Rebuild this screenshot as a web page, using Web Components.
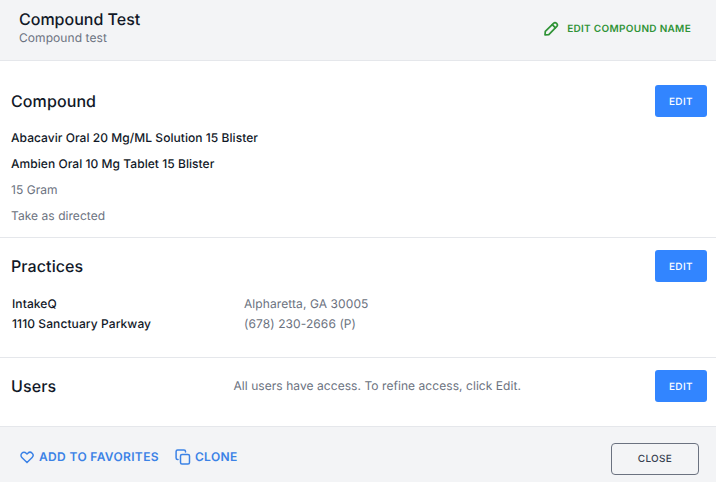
<!DOCTYPE html>
<html>
<head>
<meta charset="utf-8">
<title>Compound Test</title>
<style>
  html, body { margin: 0; padding: 0; background: #fff; }
  body { width: 716px; height: 482px; overflow: hidden; font-family: Inter, "Liberation Sans", sans-serif; color: #111827; text-rendering: geometricPrecision; }
</style>
</head>
<body>
<compound-modal>
  <modal-header slot="header" heading="Compound Test" sub="Compound test"></modal-header>

  <modal-section heading="Compound" style="--sec-h:176px; --head-top:24px; --body-top:8px">
    <p class="strong">Abacavir Oral 20 Mg/ML Solution 15 Blister</p>
    <p class="strong">Ambien Oral 10 Mg Tablet 15 Blister</p>
    <p>15 Gram</p>
    <p>Take as directed</p>
  </modal-section>

  <modal-section heading="Practices" style="--sec-h:119px; --head-top:12px; --body-top:12px">
    <practice-row>
      <span slot="name">IntakeQ</span>
      <span slot="address">1110 Sanctuary Parkway</span>
      <span slot="city">Alpharetta, GA 30005</span>
      <span slot="phone">(678) 230-2666 (P)</span>
    </practice-row>
  </modal-section>

  <modal-section heading="Users" note="All users have access. To refine access, click Edit." style="--sec-h:67px; --head-top:12px; --body-top:0px"></modal-section>

  <modal-footer slot="footer"></modal-footer>
</compound-modal>

<script>
  class CompoundModal extends HTMLElement {
    connectedCallback() {
      this.attachShadow({ mode: 'open' });
      this.shadowRoot.innerHTML = `
        <style>
          :host { display: flex; flex-direction: column; width: 716px; height: 482px; background: #fff; }
          main { flex: 1; display: flex; flex-direction: column; }
          ::slotted(*) { flex: none; }
        </style>
        <slot name="header"></slot>
        <main><slot></slot></main>
        <slot name="footer"></slot>
      `;
    }
  }

  class ModalHeader extends HTMLElement {
    connectedCallback() {
      this.attachShadow({ mode: 'open' });
      this.shadowRoot.innerHTML = `
        <style>
          :host {
            display: flex;
            justify-content: space-between;
            align-items: center;
            height: 60px;
            padding: 0 25px 0 19px;
            background: #f3f4f6;
            border-bottom: 1px solid #e5e7eb;
          }
          h1 { margin: 0; font-size: 16px; line-height: 20px; font-weight: 500; color: #111827; }
          p { margin: 0; font-size: 12px; line-height: 18px; letter-spacing: 0.07px; color: #6b7280; }
          .titles { margin-top: -4px; }
          .edit {
            display: flex;
            align-items: center;
            gap: 8px;
            margin-top: -3px;
            font-size: 10px;
            font-weight: 600;
            letter-spacing: 0.3px;
            color: #2f9336;
          }
          svg { display: block; }
        </style>
        <div class="titles">
          <h1>${this.getAttribute('heading')}</h1>
          <p>${this.getAttribute('sub')}</p>
        </div>
        <div class="edit">
          <svg width="15" height="15" viewBox="0 0 15 15" fill="none" stroke="currentColor" stroke-width="1.7" stroke-linejoin="round" stroke-linecap="round">
            <path d="M1 13.9 L1.3 10.3 L9.5 2.3 C10.4 1.4 11.6 1.4 12.6 2.3 C13.6 3.3 13.7 4.4 12.8 5.4 L4.8 13.6 Z"/>
            <path d="M8.3 3.6 L11.4 6.8"/>
          </svg>
          <span>EDIT COMPOUND NAME</span>
        </div>
      `;
    }
  }

  class ModalSection extends HTMLElement {
    connectedCallback() {
      const note = this.getAttribute('note');
      this.attachShadow({ mode: 'open' });
      this.shadowRoot.innerHTML = `
        <style>
          :host {
            display: block;
            box-sizing: border-box;
            height: calc(var(--sec-h) + 1px);
            padding: var(--head-top) 9px 0 11px;
            border-bottom: 1px solid #e5e7eb;
          }
          :host(:last-of-type) { border-bottom: 0; }
          .top { display: flex; align-items: center; height: 32px; }
          h2 { margin: 0; font-size: 16px; line-height: 20px; font-weight: 500; letter-spacing: 0.1px; color: #111827; }
          .note { margin-left: auto; margin-right: 134px; margin-bottom: 2px; font-size: 12px; letter-spacing: 0.06px; color: #6b7280; }
          edit-button { margin-left: auto; }
          .note + edit-button { margin-left: 0; }
          .body { padding-top: var(--body-top); font-size: 12px; letter-spacing: 0.05px; color: #6b7280; }
          ::slotted(p) { margin: 0; height: 26px; line-height: 26px; }
          ::slotted(p.strong) { font-weight: 500; color: #111827; }
        </style>
        <div class="top">
          <h2>${this.getAttribute('heading')}</h2>
          ${note ? `<span class="note">${note}</span>` : ''}
          <edit-button></edit-button>
        </div>
        <div class="body"><slot></slot></div>
      `;
    }
  }

  class EditButton extends HTMLElement {
    connectedCallback() {
      this.attachShadow({ mode: 'open' });
      this.shadowRoot.innerHTML = `
        <style>
          :host {
            display: flex;
            align-items: center;
            justify-content: center;
            box-sizing: border-box;
            width: 52px;
            height: 32px;
            padding-top: 2px;
            border-radius: 3px;
            background: #3285ff;
            color: #fff;
            font-size: 10px;
            font-weight: 500;
            letter-spacing: 0.4px;
          }
        </style>
        EDIT
      `;
    }
  }

  class PracticeRow extends HTMLElement {
    connectedCallback() {
      this.attachShadow({ mode: 'open' });
      this.shadowRoot.innerHTML = `
        <style>
          :host {
            display: grid;
            grid-template-columns: 232px 1fr;
            grid-auto-rows: 20px;
            padding-left: 1px;
            font-size: 12px;
            line-height: 20px;
            letter-spacing: 0.09px;
          }
          .b { font-weight: 500; color: #111827; }
          .l { color: #6b7280; }
        </style>
        <div class="b"><slot name="name"></slot></div>
        <div class="l"><slot name="city"></slot></div>
        <div class="b"><slot name="address"></slot></div>
        <div class="l"><slot name="phone"></slot></div>
      `;
    }
  }

  class ModalFooter extends HTMLElement {
    connectedCallback() {
      this.attachShadow({ mode: 'open' });
      this.shadowRoot.innerHTML = `
        <style>
          :host {
            display: flex;
            align-items: center;
            box-sizing: border-box;
            height: 56px;
            padding: 6px 17px 0 19px;
            background: #f3f4f6;
            border-top: 1px solid #e5e7eb;
          }
          .link {
            display: flex;
            align-items: center;
            gap: 4px;
            margin-right: 16px;
            margin-top: -2px;
            font-size: 12px;
            font-weight: 600;
            letter-spacing: 0.35px;
            color: #3b82e6;
          }
          svg { display: block; }
          .close {
            box-sizing: border-box;
            display: flex;
            align-items: center;
            justify-content: center;
            width: 88px;
            height: 32px;
            margin: 3px 0 0 auto;
            border: 1px solid #6b7280;
            border-radius: 4px;
            font-size: 10px;
            font-weight: 500;
            letter-spacing: 0.3px;
            color: #374151;
          }
        </style>
        <div class="link">
          <svg width="16" height="16" viewBox="0 0 24 24" fill="none" stroke="currentColor" stroke-width="2.2" stroke-linejoin="round" stroke-linecap="round">
            <path d="M4.3 6.3a4.5 4.5 0 0 0 0 6.4L12 20.4l7.7-7.7a4.5 4.5 0 0 0-6.4-6.4L12 7.6l-1.3-1.3a4.5 4.5 0 0 0-6.4 0z"/>
          </svg>
          <span>ADD TO FAVORITES</span>
        </div>
        <div class="link">
          <svg width="16" height="16" viewBox="0 0 16 16" fill="none" stroke="currentColor" stroke-width="1.5" stroke-linejoin="round" stroke-linecap="round">
            <rect x="5.5" y="5.5" width="9" height="9.5" rx="1.5"/>
            <path d="M10.5 3V2.5A1.5 1.5 0 0 0 9 1H2.6A1.5 1.5 0 0 0 1.1 2.5V9A1.5 1.5 0 0 0 2.6 10.5H3"/>
          </svg>
          <span>CLONE</span>
        </div>
        <div class="close">CLOSE</div>
      `;
    }
  }

  customElements.define('compound-modal', CompoundModal);
  customElements.define('modal-header', ModalHeader);
  customElements.define('modal-section', ModalSection);
  customElements.define('edit-button', EditButton);
  customElements.define('practice-row', PracticeRow);
  customElements.define('modal-footer', ModalFooter);
</script>
</body>
</html>
